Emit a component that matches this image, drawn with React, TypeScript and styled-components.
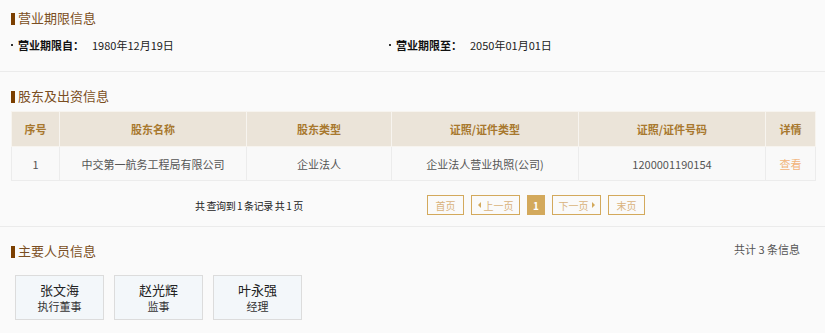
import React from 'react';
import styled, { createGlobalStyle } from 'styled-components';

const GlobalStyle = createGlobalStyle`
  html, body {
    margin: 0;
    padding: 0;
    background: #fafafa;
  }
  body {
    font-family: "Noto Sans CJK SC", "Liberation Sans", sans-serif;
    color: #333;
  }
`;

const shareholders = [
  {
    no: '1',
    name: '中交第一航务工程局有限公司',
    type: '企业法人',
    certType: '企业法人营业执照(公司)',
    certNo: '1200001190154',
  },
];

const staff = [
  { name: '张文海', role: '执行董事' },
  { name: '赵光辉', role: '监事' },
  { name: '叶永强', role: '经理' },
];

const columns = [
  { title: '序号', width: 48 },
  { title: '股东名称', width: 187 },
  { title: '股东类型', width: 145 },
  { title: '证照/证件类型', width: 187 },
  { title: '证照/证件号码', width: 187 },
  { title: '详情', width: 50 },
];

function App() {
  return (
    <>
      <GlobalStyle />
      <Page>
        <Section $pt={8} $pb={16}>
          <SectionTitle>营业期限信息</SectionTitle>
          <DateRow>
            <DateItem>
              <Dot />
              <DateLabel>营业期限自：</DateLabel>
              <DateValue>1980年12月19日</DateValue>
            </DateItem>
            <DateItem>
              <Dot />
              <DateLabel>营业期限至：</DateLabel>
              <DateValue>2050年01月01日</DateValue>
            </DateItem>
          </DateRow>
        </Section>

        <Section $pt={14} $pb={11}>
          <SectionTitle>股东及出资信息</SectionTitle>
          <Table>
            <colgroup>
              {columns.map((c) => (
                <col key={c.title} style={{ width: c.width }} />
              ))}
            </colgroup>
            <thead>
              <tr>
                {columns.map((c) => (
                  <Th key={c.title}>{c.title}</Th>
                ))}
              </tr>
            </thead>
            <tbody>
              {shareholders.map((s) => (
                <tr key={s.no}>
                  <Td>{s.no}</Td>
                  <Td>{s.name}</Td>
                  <Td>{s.type}</Td>
                  <Td>{s.certType}</Td>
                  <Td>{s.certNo}</Td>
                  <Td>
                    <DetailLink>查看</DetailLink>
                  </Td>
                </tr>
              ))}
            </tbody>
          </Table>
          <Pager>
            <PagerInfo>共 查询到 1 条记录 共 1 页</PagerInfo>
            <PagerButtons>
              <PageButton $w={37}>首页</PageButton>
              <PageButton $w={49}>
                <ArrowLeft />
                上一页
              </PageButton>
              <PageButton $w={18} $active>
                1
              </PageButton>
              <PageButton $w={49}>
                下一页
                <ArrowRight />
              </PageButton>
              <PageButton $w={37}>末页</PageButton>
            </PagerButtons>
          </Pager>
        </Section>

        <Section $pt={8} $pb={14} $last>
          <TitleRow>
            <SectionTitle>主要人员信息</SectionTitle>
            <Total>共计 3 条信息</Total>
          </TitleRow>
          <Cards>
            {staff.map((p) => (
              <PersonCard key={p.name}>
                <PersonName>{p.name}</PersonName>
                <PersonRole>{p.role}</PersonRole>
              </PersonCard>
            ))}
          </Cards>
        </Section>
      </Page>
    </>
  );
}

export default App;

const Page = styled.div`
  width: 825px;
  height: 333px;
  overflow: hidden;
  background: #fafafa;
`;

const Section = styled.section<{ $pt: number; $pb: number; $last?: boolean }>`
  padding: ${(p) => p.$pt}px 10px ${(p) => p.$pb}px 11px;
  border-bottom: ${(p) => (p.$last ? 'none' : '1px solid #ebebeb')};
`;

const SectionTitle = styled.h3`
  margin: 0;
  height: 20px;
  display: flex;
  align-items: center;
  font-size: 13px;
  font-weight: normal;
  color: #7a4e22;
  line-height: 20px;

  &::before {
    content: '';
    display: inline-block;
    width: 4px;
    height: 12px;
    margin-right: 3px;
    margin-top: 1px;
    background: #7b3f00;
  }
`;

const DateRow = styled.div`
  display: flex;
  margin-top: 7px;
  height: 20px;
  align-items: center;
`;

const DateItem = styled.div`
  width: 378px;
  display: flex;
  align-items: center;
  font-size: 11px;
`;

const Dot = styled.span`
  width: 2px;
  height: 2px;
  margin-right: 5px;
  margin-top: -1px;
  background: #333;
`;

const DateLabel = styled.span`
  font-weight: bold;
  color: #111;
  width: 74px;
`;

const DateValue = styled.span`
  color: #222;
`;

const Table = styled.table`
  margin-top: 5px;
  width: 804px;
  border-collapse: collapse;
  table-layout: fixed;
  font-size: 11px;
  border: 1px solid #ececec;
`;

const Th = styled.th`
  height: 34px;
  padding: 0;
  background: #ebe4d9;
  color: #a8782e;
  font-weight: bold;
  text-align: center;
  border: 1px solid #f7f4ef;
`;

const Td = styled.td`
  height: 33px;
  padding: 0;
  text-align: center;
  color: #555;
  background: #f9f9f9;
  border: 1px solid #ececec;
`;

const DetailLink = styled.span`
  color: #f2b47a;
  cursor: pointer;
`;

const Pager = styled.div`
  display: flex;
  align-items: center;
  margin-top: 14px;
  padding-left: 184px;
`;

const PagerInfo = styled.div`
  width: 232px;
  font-size: 10px;
  letter-spacing: -0.4px;
  color: #222;
`;

const PagerButtons = styled.div`
  display: flex;
  gap: 7px;
`;

const PageButton = styled.div<{ $w: number; $active?: boolean }>`
  box-sizing: border-box;
  width: ${(p) => p.$w}px;
  height: 20px;
  display: flex;
  align-items: center;
  justify-content: center;
  gap: 3px;
  font-size: 10px;
  color: ${(p) => (p.$active ? '#fff' : '#d9b27a')};
  background: ${(p) => (p.$active ? '#d3a95c' : 'transparent')};
  border: 1px solid #d3a95c;
  font-weight: ${(p) => (p.$active ? 'bold' : 'normal')};
`;

const ArrowLeft = styled.span`
  width: 0;
  height: 0;
  border-top: 3px solid transparent;
  border-bottom: 3px solid transparent;
  border-right: 3px solid #d3a95c;
`;

const ArrowRight = styled.span`
  width: 0;
  height: 0;
  border-top: 3px solid transparent;
  border-bottom: 3px solid transparent;
  border-left: 3px solid #d3a95c;
`;

const TitleRow = styled.div`
  display: flex;
  justify-content: space-between;
  align-items: center;
  padding-top: 6px;
  padding-right: 15px;
`;

const Total = styled.span`
  font-size: 11px;
  color: #555;
  margin-top: -4px;
`;

const Cards = styled.div`
  display: flex;
  gap: 10px;
  margin-top: 14px;
  padding-left: 4px;
`;

const PersonCard = styled.div`
  box-sizing: border-box;
  width: 89px;
  height: 45px;
  display: flex;
  flex-direction: column;
  align-items: center;
  justify-content: center;
  background: #f3f7fa;
  border: 1px solid #dcdcdc;
`;

const PersonName = styled.div`
  font-size: 13px;
  line-height: 17px;
  color: #222;
`;

const PersonRole = styled.div`
  font-size: 11px;
  line-height: 16px;
  color: #333;
`;
